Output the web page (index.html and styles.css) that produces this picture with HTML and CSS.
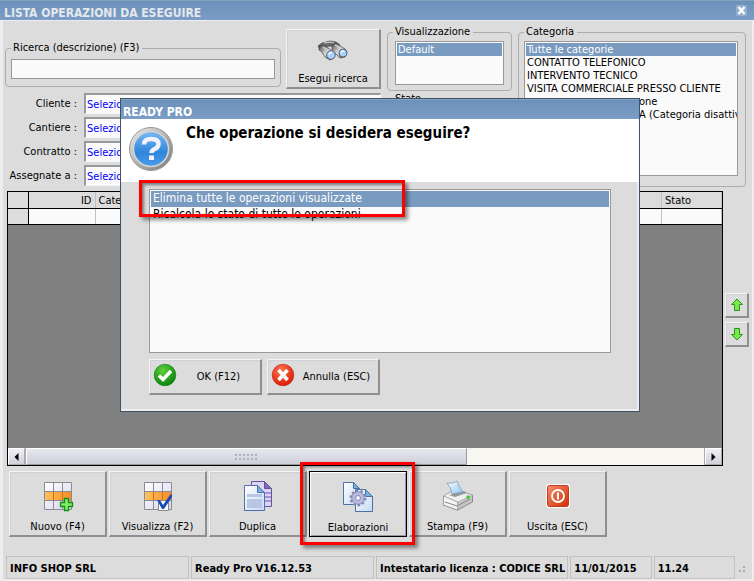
FILE: index.html
```
<!DOCTYPE html>
<html lang="it">
<head>
<meta charset="utf-8">
<title>Lista operazioni da eseguire</title>
<link rel="stylesheet" href="styles.css">
</head>
<body>
<div class="window">
  <header class="titlebar">
    <h1>LISTA OPERAZIONI DA ESEGUIRE</h1>
    <button class="close" type="button" aria-label="Chiudi">
      <svg viewBox="0 0 11 11" width="11" height="11"><path d="M2.5 2l6 7M8.500 2l-6 7" stroke="#fff" stroke-width="2.400"/></svg>
    </button>
  </header>

  <main class="content">
    <section class="filters">
      <div class="search-col">
        <div class="search-row">
          <fieldset class="group search">
            <legend><label for="q">Ricerca (descrizione) (F3)</label></legend>
            <input id="q" type="text">
          </fieldset>
          <button class="btn tall run" type="button">
            <svg viewBox="0 0 32 22" width="32" height="22">
              <defs><linearGradient id="bin" x1="0" y1="0" x2="1" y2="1"><stop offset="0" stop-color="#444"/><stop offset=".5" stop-color="#ddd"/><stop offset="1" stop-color="#444"/></linearGradient></defs>
              <path d="M1 6l4-3 8-2 6 1 4 3-4 3-5-2-8 1-3 2z" fill="#6a6a6a" stroke="#444" stroke-width=".7"/>
              <path d="M2 6l4-1 5 3 7 5-1 5-4 2-5-3-4-6-2-1z" fill="url(#bin)" stroke="#444" stroke-width=".7"/>
              <path d="M15 4l4-1 9 6 2 3-2 5-5 1-4-4-4-4z" fill="url(#bin)" stroke="#444" stroke-width=".7"/>
              <path d="M7 3l6-1 4 1M6 7l6 5M18 5l6 4" stroke="#d5d5d5" stroke-width="1.200" fill="none"/>
              <circle cx="14" cy="15" r="4.300" fill="#a9d2fb" stroke="#5a6470"/><circle cx="26" cy="13" r="4" fill="#a9d2fb" stroke="#5a6470"/>
              <path d="M12 15q0-2 3-3M24 13q0-2 3-2" stroke="#e9f6ff" stroke-width="1.500" fill="none"/>
            </svg>
            <span>Esegui ricerca</span>
          </button>
        </div>
        <div class="fields">
          <label for="cliente">Cliente :</label><select id="cliente"><option>Seleziona</option></select>
          <label for="cantiere">Cantiere :</label><select id="cantiere"><option>Seleziona</option></select>
          <label for="contratto">Contratto :</label><select id="contratto"><option>Seleziona</option></select>
          <label for="assegnate">Assegnate a :</label><select id="assegnate"><option>Seleziona</option></select>
        </div>
      </div>
      <div class="view-col">
        <fieldset class="group view">
          <legend><label for="vista">Visualizzazione</label></legend>
          <select id="vista" class="listbox" size="3"><option selected>Default</option></select>
        </fieldset>
        <fieldset class="group state"><legend>Stato</legend></fieldset>
      </div>
      <fieldset class="group category">
        <legend><label for="categoria">Categoria</label></legend>
        <select id="categoria" class="listbox" size="6">
          <option selected>Tutte le categorie</option>
          <option>CONTATTO TELEFONICO</option>
          <option>INTERVENTO TECNICO</option>
          <option>VISITA COMMERCIALE PRESSO CLIENTE</option>
          <option class="indented">one</option>
          <option class="indented">A (Categoria disattiva)</option>
        </select>
      </fieldset>
    </section>

    <section class="results">
      <div class="grid">
        <table>
          <colgroup><col class="c-mark"><col class="c-id"><col><col class="c-state"></colgroup>
          <thead><tr><th></th><th class="num">ID</th><th>Categoria</th><th>Stato</th></tr></thead>
          <tbody><tr><td></td><td></td><td></td><td></td></tr></tbody>
        </table>
        <div class="scroll">
          <button type="button" aria-label="Scorri a sinistra"><svg viewBox="0 0 5 8" width="5" height="8"><path d="M4.500 0v8L.5 4z"/></svg></button>
          <div class="track"><div class="thumb"><i class="dots"></i><i class="dots"></i></div></div>
          <button type="button" aria-label="Scorri a destra"><svg viewBox="0 0 5 8" width="5" height="8"><path d="M.5 0v8l4-4z"/></svg></button>
        </div>
      </div>
      <div class="movers">
        <button class="btn" type="button" aria-label="Su"><svg viewBox="0 0 14 14" width="14" height="14"><path d="M7 1l5.500 5.500H9.500V12.500H4.500V6.500H1.500z" fill="#7be84a" stroke="#25951c"/></svg></button>
        <button class="btn" type="button" aria-label="Giù"><svg viewBox="0 0 14 14" width="14" height="14"><path d="M7 13l5.500-5.500H9.500V1.500H4.500V7.500H1.500z" fill="#7be84a" stroke="#25951c"/></svg></button>
      </div>
    </section>

    <nav class="toolbar">
      <button class="btn tall" type="button">
        <svg viewBox="0 0 32 32" width="32" height="32">
          <defs><linearGradient id="or"><stop offset="0" stop-color="#ffc25e"/><stop offset="1" stop-color="#f98a25"/></linearGradient><linearGradient id="lav" x1="0" y1="0" x2="1" y2="1"><stop offset="0" stop-color="#fff"/><stop offset="1" stop-color="#d4d4ee"/></linearGradient></defs>
          <path d="M2.500 2.500h27v27h-27z" fill="url(#lav)"/><path d="M2 11h28v9H2z" fill="url(#or)"/>
          <path d="M2.500 2.500h27v27h-27zM11.500 2v28M20.500 2v28M2 11.500h28M2 20.500h28" fill="none" stroke="#8b8b93"/><path d="M11.500 12v8M20.500 12v8" stroke="#c97516"/>
          <path d="M22.500 18.500h4v4h4v4h-4v4h-4v-4h-4v-4h4z" fill="#84ea63" stroke="#129018" stroke-width="1.300"/>
        </svg><span>Nuovo (F4)</span></button>
      <button class="btn tall" type="button">
        <svg viewBox="0 0 32 32" width="32" height="32">
          <path d="M2.500 2.500h27v27h-27z" fill="url(#lav)"/><path d="M2 11h28v9H2z" fill="url(#or)"/>
          <path d="M2.500 2.500h27v27h-27zM11.500 2v28M20.500 2v28M2 11.500h28M2 20.500h28" fill="none" stroke="#8b8b93"/><path d="M11.500 12v8M20.500 12v8" stroke="#c97516"/>
          <path d="M16.500 20.500h10v10h-10z" fill="#fff" stroke="#888"/><path d="M15 20h3l3 5 7-10 2-1v3l-8 12h-2z" fill="#174db4"/>
        </svg><span>Visualizza (F2)</span></button>
      <button class="btn tall" type="button">
        <svg viewBox="0 0 32 32" width="32" height="32">
          <defs><linearGradient id="pg" x1="0" y1="0" x2="1" y2="1"><stop offset="0" stop-color="#fff"/><stop offset="1" stop-color="#c5daf3"/></linearGradient></defs>
          <path d="M9.500 1.500h13l7 7v18h-20z" fill="#dcd5f1" stroke="#6553a0"/><path d="M22.500 1.500v7h7z" fill="#8069b8" stroke="#6553a0"/><path d="M23 13h6M23 17h6M23 21h6" stroke="#a493d0" stroke-width="2"/>
          <path d="M2.500 5.500h13l7 7v18h-20z" fill="url(#pg)" stroke="#536fa9"/><path d="M15.500 5.500v7h7z" fill="#70b5df" stroke="#536fa9"/>
          <path d="M5 14h15v3H5zM5 19h15v9H5z" fill="#b8c5e3"/>
        </svg><span>Duplica</span></button>
      <button class="btn tall focused" type="button">
        <svg viewBox="0 0 32 32" width="32" height="32">
          <path d="M1.500 2.500h10l6 6v16h-16z" fill="url(#pg)" stroke="#4d70a5"/><path d="M11.500 2.500v6h6z" fill="#70b5df" stroke="#4d70a5"/>
          <path d="M13.500 9.500h10l7 7v15h-17z" fill="url(#pg)" stroke="#4d70a5"/><path d="M23.500 9.500v7h7z" fill="#70b5df" stroke="#4d70a5"/>
          <circle cx="16" cy="18" r="7.200" fill="none" stroke="#8487b7" stroke-width="2.500" stroke-dasharray="2.500 2.020"/>
          <circle cx="16" cy="18" r="6.300" fill="#babbdd" stroke="#8487b7"/><circle cx="16" cy="18" r="2.500" fill="#f2f3fc" stroke="#8487b7"/>
        </svg><span>Elaborazioni</span></button>
      <button class="btn tall" type="button">
        <svg viewBox="0 0 32 32" width="32" height="32">
          <defs><linearGradient id="pa" x1="0" y1="0" x2="1" y2="1"><stop offset="0" stop-color="#fff"/><stop offset="1" stop-color="#8fc4ee"/></linearGradient></defs>
          <path d="M1.500 16l11-6 18 5v7l-15 8-14-5z" fill="#c4c4c4" stroke="#777" stroke-width=".8"/>
          <path d="M1.500 16l11-6 18 5-15 7z" fill="#efefef" stroke="#aaa" stroke-width=".6"/><path d="M1.500 16l14 6v8l-14-5z" fill="#f4f4f4" stroke="#888" stroke-width=".6"/>
          <path d="M3 22l12 4 13-7" fill="none" stroke="#888"/><path d="M7 15l15-4 3 2-12 4z" fill="#999"/>
          <path d="M5 3q6 1 10-2 2 6 6 11l-11 2q-1-7-5-11z" fill="url(#pa)" stroke="#6c94b5" stroke-width=".7"/><circle cx="26" cy="17" r="1.700" fill="#2fce24"/>
        </svg><span>Stampa (F9)</span></button>
      <button class="btn tall" type="button">
        <svg viewBox="0 0 32 32" width="32" height="32">
          <defs><linearGradient id="rd" x1="0" y1="0" x2="1" y2="1"><stop offset="0" stop-color="#f78e68"/><stop offset="1" stop-color="#ce2d08"/></linearGradient></defs>
          <rect x="4" y="4" width="24" height="24" rx="3" fill="#fff"/><rect x="5.500" y="5.500" width="21" height="21" rx="2" fill="url(#rd)" stroke="#c03b1c"/>
          <circle cx="16" cy="16" r="6" fill="none" stroke="#fff" stroke-width="1.800"/><path d="M16 12.500v7" stroke="#fff" stroke-width="2"/>
        </svg><span>Uscita (ESC)</span></button>
    </nav>

    <footer class="status">
      <span>INFO SHOP SRL</span><span>Ready Pro V16.12.53</span><span class="license">Intestatario licenza : CODICE SRL</span><span class="short">11/01/2015</span><span class="short">11.24</span>
      <svg class="grip" viewBox="0 0 12 12" width="12" height="12"><path d="M2 8h2v2H2zM6 8h2v2H6zM6 4h2v2H6z" fill="#aaa"/></svg>
    </footer>
  </main>

  <section class="dialog" role="dialog" aria-labelledby="ask">
    <header class="titlebar"><h2>READY PRO</h2></header>
    <div class="question">
      <svg viewBox="0 0 46 46" width="46" height="46">
        <defs><linearGradient id="ring" x1="0" y1="0" x2="1" y2="1"><stop offset="0" stop-color="#eee"/><stop offset="1" stop-color="#777"/></linearGradient><linearGradient id="blue" x1="0" y1="0" x2="0" y2="1"><stop offset="0" stop-color="#79b9f5"/><stop offset=".6" stop-color="#2f86dc"/><stop offset="1" stop-color="#4a9bea"/></linearGradient></defs>
        <circle cx="23" cy="23" r="21.500" fill="url(#ring)" stroke="#999"/><circle cx="23" cy="23" r="17.500" fill="url(#blue)" stroke="#d5d5d5" stroke-width="1.500"/>
        <path d="M16 18.500q0-5.500 7-5.500 7.500 0 7.500 5 0 3.500-4 5-3 1.500-3 4" fill="none" stroke="#f3f2fb" stroke-width="4.500"/><path d="M21 29.500h5v4.500h-5z" fill="#f3f2fb"/>
      </svg>
      <h3 id="ask">Che operazione si desidera eseguire?</h3>
    </div>
    <div class="choices">
      <select class="listbox large" size="10" aria-labelledby="ask">
        <option selected>Elimina tutte le operazioni visualizzate</option>
        <option>Ricalcola lo stato di tutte le operazioni</option>
      </select>
      <div class="actions">
        <button class="btn" type="button">
          <svg viewBox="0 0 24 24" width="24" height="24"><defs><radialGradient id="gr" cx=".4" cy=".3" r=".7"><stop offset="0" stop-color="#5fd03b"/><stop offset="1" stop-color="#0b850e"/></radialGradient></defs><circle cx="12" cy="12" r="10.800" fill="url(#gr)" stroke="#168218" stroke-width=".6"/><path d="M6 12.500l4 4 8-8.500" stroke="#fff" stroke-width="3.400" fill="none"/></svg>
          <span>OK (F12)</span></button>
        <button class="btn" type="button">
          <svg viewBox="0 0 24 24" width="24" height="24"><defs><radialGradient id="rr" cx=".4" cy=".3" r=".7"><stop offset="0" stop-color="#ff7650"/><stop offset="1" stop-color="#dc1d05"/></radialGradient></defs><circle cx="12" cy="12" r="10.800" fill="url(#rr)" stroke="#b92814" stroke-width=".6"/><path d="M7.500 7l9 10M16.500 7l-9 10" stroke="#fff" stroke-width="3.600"/></svg>
          <span>Annulla (ESC)</span></button>
      </div>
    </div>
  </section>
  <div class="mark mark-option"></div>
  <div class="mark mark-button"></div>
</div>
</body>
</html>
```
FILE: styles.css
```
* { box-sizing: border-box; }
body { margin: 0; background: #dcdcdc; color: #000; font: 11px/14px "DejaVu Sans Condensed", "Noto Sans", sans-serif; }
button, input, select { font: inherit; color: inherit; }
h1, h2, h3 { margin: 0; }
svg { display: block; flex: none; }

.window { position: relative; display: flex; flex-direction: column; min-height: 100vh; }
.titlebar { display: flex; align-items: center; justify-content: space-between; height: 20px; padding: 4px 7px 0 4px; background: linear-gradient(#6b91ba, #7c9dc5); border-top: 1px solid #86a3bf; color: #e4e8ec; }
.titlebar h1, .titlebar h2 { font-size: 12px; line-height: 16px; font-weight: bold; }
.close { width: 11px; height: 11px; margin-bottom: 4px; padding: 0; border: 0; border-radius: 1px; background: #92afcd; }
.content { flex: 1; display: flex; flex-direction: column; border: solid #ededf0; border-width: 1px 2px 2px 3px; padding: 4px 3px 0 2px; }

.group { min-width: 0; margin: 0; padding: 0; border: 1px solid #adadad; border-radius: 4px; }
.group legend { margin-left: 5px; padding: 0 3px 0 2px; line-height: 14px; }
.filters { display: grid; grid-template-columns: minmax(0, 376fr) minmax(0, 125fr) minmax(0, 228fr); gap: 6px; height: 162px; margin-right: 3px; }
.search-row { display: flex; gap: 5px; align-items: flex-end; padding-top: 4px; }
.search { flex: 1; height: 46px; margin-bottom: 2px; }
.search input { display: block; width: calc(100% - 10px); height: 20px; margin: 4px 5px 0; border: 1px solid #999; background: #fafafa; }

.btn { display: flex; align-items: center; padding: 0; border: solid; border-width: 1px 2px 2px 1px; border-color: #f4f4f6 #8f8f8f #8f8f8f #f4f4f6; background: #dcdcdc; box-shadow: inset 1px 1px #d0d0d8; }
.btn.tall { flex-direction: column; justify-content: space-between; }
.run { width: 95px; height: 60px; padding: 10px 0 1px; }

.fields { display: grid; grid-template-columns: 72px minmax(0, 1fr); gap: 3px 7px; margin-top: 4px; align-items: center; }
.fields label { text-align: right; }
.fields select { appearance: none; width: 100%; height: 21px; padding: 1px 1px 0; border: 1px solid #f4f4f4; border-top: 2px solid #999; border-left: 2px solid #999; border-radius: 0; background: #fafafa; color: #00f; }

.listbox { display: block; appearance: none; padding: 1px; border: 1px solid #999; border-radius: 0; background: #fafafa; overflow: hidden; outline: 0; }
.listbox option { min-height: 13px; padding: 0 1px; line-height: 13px; }
.listbox option:checked { background: #7a9bc0 linear-gradient(#7a9bc0, #7a9bc0); color: #fff; }
.listbox option.indented { padding-left: 113px; }
.listbox.large { width: 100%; height: 164px; font-size: 12px; }
.listbox.large option { min-height: 16px; padding: 0 2px; line-height: 16px; }
.view { height: 66px; }
.view .listbox { width: calc(100% - 14px); height: 44px; margin: 2px 7px; }
.state { height: 90px; margin-top: 1px; }
.category .listbox { width: calc(100% - 12px); height: 135px; margin: 2px 7px 0 5px; }

.results { flex: 1; display: flex; align-items: center; gap: 2px; margin-left: 2px; margin-top: 4px; }
.grid { flex: 1; align-self: stretch; display: flex; flex-direction: column; justify-content: space-between; border: 1px solid #000; background: #808080; }
.grid table { width: 100%; table-layout: fixed; border-collapse: collapse; }
.grid th, .grid td { height: 16px; padding: 1px 3px 0; line-height: 15px; border-right: 1px solid #c0c0c0; border-bottom: 1px solid #000; background: #dcdcdc; font-weight: normal; text-align: left; }
.grid td { background: #fafafa; }
.grid th.num { text-align: right; }
.grid th:first-child, .grid td:first-child { border-right-color: #000; background: #dcdcdc; }
.c-mark { width: 20px; }
.c-id { width: 67px; }
.c-state { width: 60px; }
.scroll { display: flex; height: 17px; background: #f7f6f1; }
.scroll button { display: flex; align-items: center; justify-content: center; width: 17px; padding: 0; border: 1px solid #aaa; border-top-color: #fff; border-left-color: #fff; background: linear-gradient(#f0f0f4, #d0d1da); }
.track { flex: 1; display: flex; border-left: 1px solid #aaa; border-right: 1px solid #aaa; }
.thumb { width: 65%; display: flex; flex-direction: column; gap: 2px; align-items: center; justify-content: center; border: 1px solid #999; border-top-color: #fff; border-left-color: #fff; background: linear-gradient(#e7e8ed, #cdced8); }
.dots { width: 22px; height: 2px; background: repeating-linear-gradient(90deg, #aeb0ba 0 2px, transparent 2px 4px); }
.movers { width: 24px; display: flex; flex-direction: column; gap: 4px; padding-bottom: 18px; }
.movers .btn { height: 25px; justify-content: center; }

.toolbar { display: flex; gap: 2px; margin: 5px 0 0 4px; }
.toolbar .btn { width: 98px; height: 66px; padding: 8px 0 1px; }
.toolbar .focused { border: 1px solid #000; box-shadow: inset 1px 1px #fff, inset -1px -1px #999; }
.status { display: flex; align-items: center; gap: 2px; height: 23px; margin: 19px 0 0 1px; font-weight: bold; }
.status span { flex: 187 1 0; height: 23px; padding: 5px 2px 3px 3px; border: 1px solid #c2c2c2; white-space: nowrap; }
.status .license { min-width: max-content; }
.status .short { flex-grow: 79; }

.dialog { position: absolute; left: 120px; right: 114px; top: 98px; height: 314px; display: flex; flex-direction: column; border: 1px solid #3d5369; background: #dcdcdc; }
.dialog .titlebar { padding-left: 2px; color: #fff; }
.question { display: flex; gap: 12px; height: 63px; padding: 6px 7px; background: #fff; }
.question h3 { font-size: 15px; line-height: 16px; }
.question svg { margin-top: 1px; }
.choices { flex: 1; padding: 7px 26px 0 28px; border: solid #ededf0; border-width: 0 2px 2px 0; }
.actions { display: flex; gap: 5px; margin-top: 6px; }
.actions .btn { width: 113px; height: 36px; padding: 0 0 0 3px; }
.actions svg { margin-bottom: 3px; }
.actions span { flex: 1; text-align: center; }

.mark { position: absolute; border: 3px solid #f00; box-shadow: 3px 3px 4px rgba(0, 0, 0, .45), inset 2px 2px 3px rgba(0, 0, 0, .45); pointer-events: none; }
.mark-option { left: 139px; top: 180px; width: 266px; height: 37px; }
.mark-button { left: 300px; top: 462px; width: 115px; height: 83px; }
```
